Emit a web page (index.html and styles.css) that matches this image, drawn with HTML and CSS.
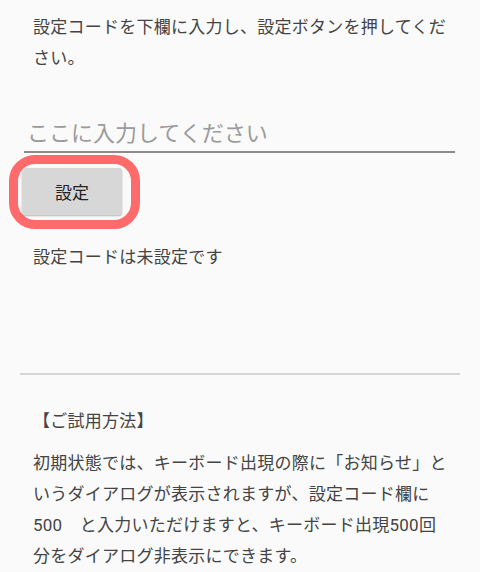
FILE: index.html
```html
<!DOCTYPE html>
<html lang="ja">
<head>
<meta charset="utf-8">
<link rel="stylesheet" href="styles.css">
</head>
<body>
<div class="page">
  <p class="text intro">設定コードを下欄に入力し、設定ボタンを押してください。</p>
  <input class="code-input" type="text" placeholder="ここに入力してください">
  <div class="highlight">
    <button class="set-button" type="button">設定</button>
  </div>
  <p class="text status">設定コードは未設定です</p>
  <hr class="divider">
  <p class="text heading">【ご試用方法】</p>
  <p class="text howto">初期状態では、キーボード出現の際に「お知らせ」というダイアログが表示されますが、設定コード欄に500　と入力いただけますと、キーボード出現500回分をダイアログ非表示にできます。</p>
</div>
</body>
</html>
```

FILE: styles.css
```css
html, body {
  margin: 0;
  padding: 0;
  background: #fafafa;
}

.page {
  width: 480px;
  height: 572px;
  overflow: hidden;
  font-family: "Roboto", "Noto Sans CJK JP", sans-serif;
  color: #444444;
}

.text {
  margin: 0;
  padding: 0 33px;
  font-size: 17px;
  line-height: 31px;
  letter-spacing: 0.25px;
}

.intro {
  padding-top: 12px;
}

.code-input {
  display: block;
  box-sizing: border-box;
  width: 431px;
  height: 34px;
  margin: 45px 0 0 24px;
  padding: 0 3px 4px 3px;
  border: none;
  border-bottom: 2px solid #8c8c8c;
  background: transparent;
  font-family: "Roboto", "Noto Sans CJK JP", sans-serif;
  font-size: 22px;
  color: #444444;
  outline: none;
}

.code-input::placeholder {
  color: #9b9b9b;
}

.highlight {
  width: fit-content;
  margin: 2px 0 0 9px;
  padding: 4px 9px 5px 4px;
  border: 9px solid #ff6a6a;
  border-radius: 26px;
}

.set-button {
  display: block;
  width: 100px;
  height: 47px;
  border: none;
  border-radius: 3px;
  background: #d6d7d6;
  box-shadow: 0 1px 2px rgba(0, 0, 0, 0.28);
  font-family: "Roboto", "Noto Sans CJK JP", sans-serif;
  font-size: 17px;
  color: #222222;
  padding: 0;
}

.status {
  margin-top: 13px;
}

.divider {
  height: 2px;
  margin: 100px 20px 0 20px;
  border: none;
  background: #d6d6d6;
}

.heading {
  margin-top: 31px;
}

.howto {
  margin-top: 11px;
}
```
